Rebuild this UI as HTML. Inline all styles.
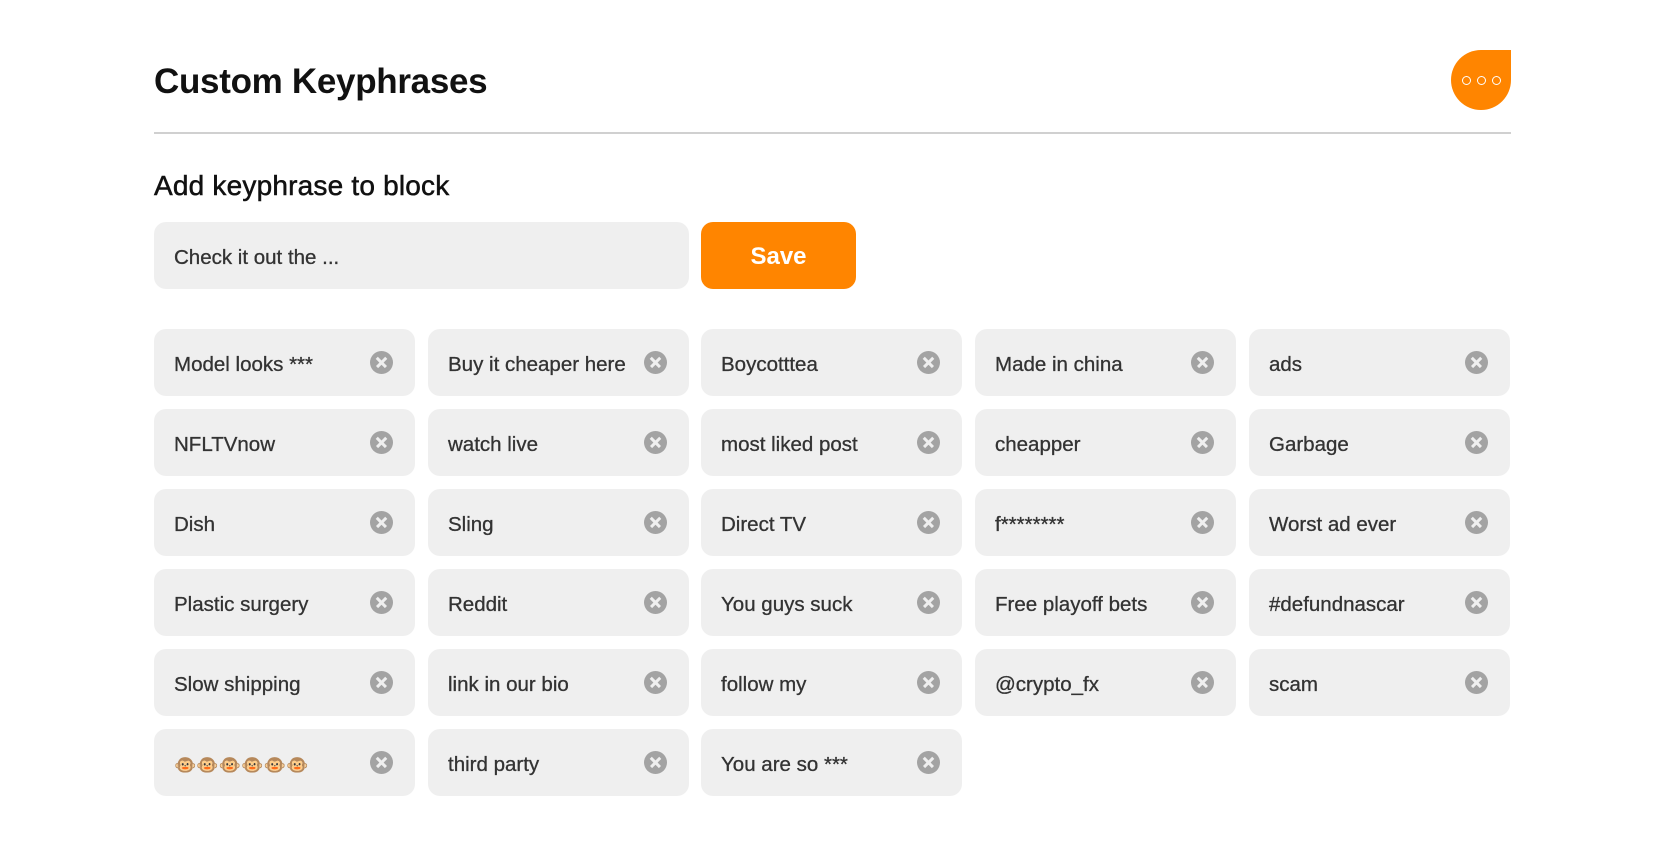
<!DOCTYPE html>
<html><head><meta charset="utf-8"><style>
*{margin:0;padding:0;box-sizing:border-box}
body{width:1664px;height:847px;background:#fff;font-family:"Liberation Sans",Arial,sans-serif;position:relative;overflow:hidden;color:#111}
h1{position:absolute;left:154px;top:62px;font-size:35px;font-weight:700;letter-spacing:-0.3px}
.more{position:absolute;left:1451px;top:50px;width:60px;height:60px;background:#ff8500;border-radius:30px 0 30px 30px;display:flex;align-items:center;justify-content:center;gap:6px}
.more i{width:9px;height:9px;border:1.6px solid #fff;border-radius:50%}
.line{position:absolute;left:154px;top:132px;width:1357px;height:2px;background:#d0d0d0}
h2{position:absolute;left:154px;top:170px;font-size:28px;font-weight:400;-webkit-text-stroke:0.5px #111;letter-spacing:0.2px}
.inp{position:absolute;left:154px;top:222px;width:535px;height:67px;background:#efefef;border-radius:12px;font-size:20.5px;color:#333;padding-left:20px;line-height:72px;-webkit-text-stroke:0.3px #333}
.save{position:absolute;left:701px;top:222px;width:155px;height:67px;background:#ff8500;border-radius:12px;color:#fff;font-size:24px;font-weight:700;text-align:center;line-height:70px}
.chip{position:absolute;width:261px;height:67px;background:#efefef;border-radius:12px;font-size:20.5px;color:#333;padding-left:20px;line-height:72px;-webkit-text-stroke:0.3px #333}
.chip .x{position:absolute;right:22px;top:22px;width:23px;height:23px;border-radius:50%;background:#a3a3a3}
.chip .x:before,.chip .x:after{content:"";position:absolute;left:5px;top:10px;width:13px;height:2.6px;background:#efefef;transform:rotate(45deg)}
.chip .x:after{transform:rotate(-45deg)}
</style></head><body>
<h1>Custom Keyphrases</h1>
<div class="more"><i></i><i></i><i></i></div>
<div class="line"></div>
<h2>Add keyphrase to block</h2>
<div class="inp">Check it out the ...</div>
<div class="save">Save</div>
<div class="chip" style="left:154px;top:329px">Model looks ***<span class="x"></span></div>
<div class="chip" style="left:428px;top:329px">Buy it cheaper here<span class="x"></span></div>
<div class="chip" style="left:701px;top:329px">Boycotttea<span class="x"></span></div>
<div class="chip" style="left:975px;top:329px">Made in china<span class="x"></span></div>
<div class="chip" style="left:1249px;top:329px">ads<span class="x"></span></div>
<div class="chip" style="left:154px;top:409px">NFLTVnow<span class="x"></span></div>
<div class="chip" style="left:428px;top:409px">watch live<span class="x"></span></div>
<div class="chip" style="left:701px;top:409px">most liked post<span class="x"></span></div>
<div class="chip" style="left:975px;top:409px">cheapper<span class="x"></span></div>
<div class="chip" style="left:1249px;top:409px">Garbage<span class="x"></span></div>
<div class="chip" style="left:154px;top:489px">Dish<span class="x"></span></div>
<div class="chip" style="left:428px;top:489px">Sling<span class="x"></span></div>
<div class="chip" style="left:701px;top:489px">Direct TV<span class="x"></span></div>
<div class="chip" style="left:975px;top:489px">f********<span class="x"></span></div>
<div class="chip" style="left:1249px;top:489px">Worst ad ever<span class="x"></span></div>
<div class="chip" style="left:154px;top:569px">Plastic surgery<span class="x"></span></div>
<div class="chip" style="left:428px;top:569px">Reddit<span class="x"></span></div>
<div class="chip" style="left:701px;top:569px">You guys suck<span class="x"></span></div>
<div class="chip" style="left:975px;top:569px">Free playoff bets<span class="x"></span></div>
<div class="chip" style="left:1249px;top:569px">#defundnascar<span class="x"></span></div>
<div class="chip" style="left:154px;top:649px">Slow shipping<span class="x"></span></div>
<div class="chip" style="left:428px;top:649px">link in our bio<span class="x"></span></div>
<div class="chip" style="left:701px;top:649px">follow my<span class="x"></span></div>
<div class="chip" style="left:975px;top:649px">@crypto_fx<span class="x"></span></div>
<div class="chip" style="left:1249px;top:649px">scam<span class="x"></span></div>
<div class="chip" style="left:154px;top:729px;font-size:18px;-webkit-text-stroke:0">🐵🐵🐵🐵🐵🐵<span class="x"></span></div>
<div class="chip" style="left:428px;top:729px">third party<span class="x"></span></div>
<div class="chip" style="left:701px;top:729px">You are so ***<span class="x"></span></div>
</body></html>
